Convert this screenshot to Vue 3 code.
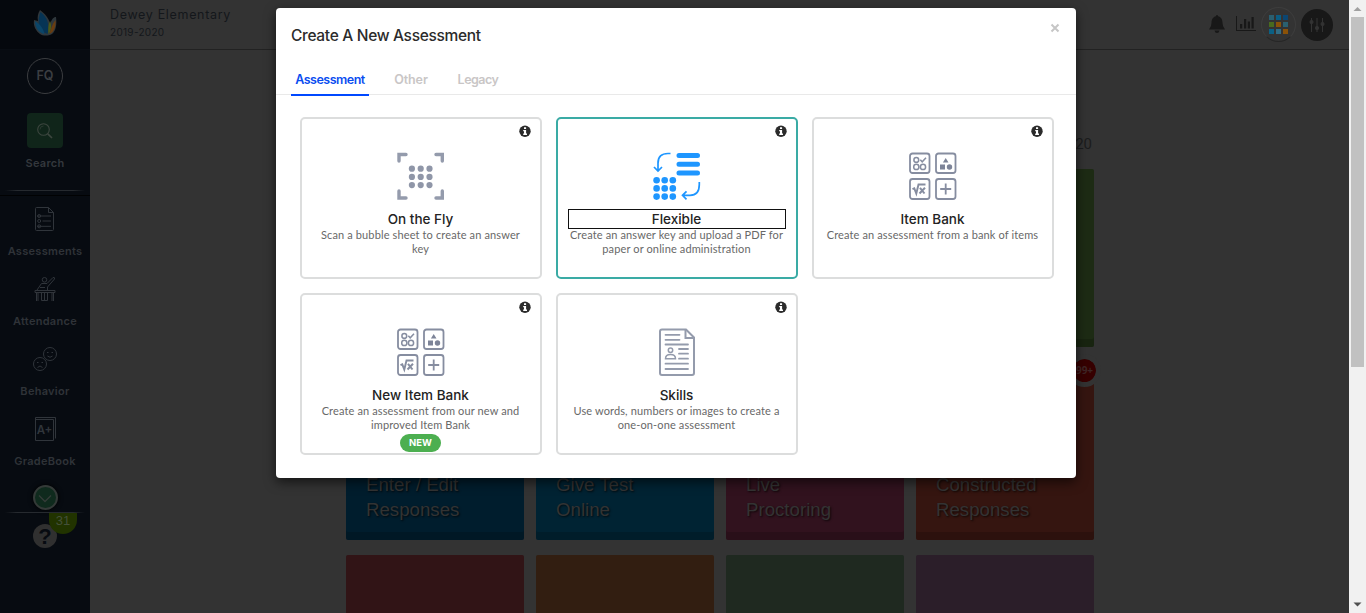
<script setup>
const menu = [
  { label: 'Assessments', icon: 'list', cls: 'm-ass' },
  { label: 'Attendance', icon: 'desk', cls: 'm-att' },
  { label: 'Behavior', icon: 'faces', cls: 'm-beh' },
  { label: 'GradeBook', icon: 'grade', cls: 'm-gra' },
]
const tabs = [
  { label: 'Assessment', cls: 't-ass active' },
  { label: 'Other', cls: 't-oth' },
  { label: 'Legacy', cls: 't-leg' },
]
const cards = [
  { title: 'On the Fly', icon: 'scan', lines: ['Scan a bubble sheet to create an answer', 'key'], cls: 'c-fly' },
  { title: 'Flexible', icon: 'flex', lines: ['Create an answer key and upload a PDF for', 'paper or online administration'], cls: 'c-flex selected' },
  { title: 'Item Bank', icon: 'bank', lines: ['Create an assessment from a bank of items'], cls: 'c-bank' },
  { title: 'New Item Bank', icon: 'bank', lines: ['Create an assessment from our new and', 'improved Item Bank'], cls: 'c-new', badge: 'NEW' },
  { title: 'Skills', icon: 'skills', lines: ['Use words, numbers or images to create a', 'one-on-one assessment'], cls: 'c-skills' },
]
const tiles = [
  { cls: 'plain' }, { cls: 'plain' }, { cls: 'plain' }, { cls: 'green' },
  { cls: 'navy', lines: ['Enter / Edit', 'Responses'] },
  { cls: 'teal', lines: ['Give Test', 'Online'] },
  { cls: 'plum', lines: ['Live', 'Proctoring'] },
  { cls: 'rust', lines: ['Constructed', 'Responses'], count: '99+' },
  { cls: 'maroon' }, { cls: 'brown' }, { cls: 'moss' }, { cls: 'violet' },
]
const gridDots = ['#2a5f70', '#0b5c82', '#0b4672', '#496a1e', '#8a5208', '#2a6070', '#0b6084', '#316c84', '#8a5208']
</script>

<template>
  <div class="app">
    <aside class="side">
      <div class="logo">
        <svg width="26" height="28" viewBox="0 0 26 28">
          <path d="M7 1C12 5 16 9 17 15C19 9 21 8 23 8C24 15 23 22 19 25C15 27 10 27 7 25C3 22 0 17 1 11L5 12C4 8 5 4 7 1Z" fill="#2f373c" />
          <path d="M7.500 3C14 8 17 15 14.500 25C5 22 4 12 7.500 3Z" fill="#063455" />
          <path d="M2 12C7 15 10 19 11.500 25C6 24 2 19 2 12Z" fill="#0b4568" />
          <path d="M17 12C19 17 18 22 15.500 25C15 20 15 16 17 12Z" fill="#4c5a18" />
          <path d="M22.500 11C23 18 21 23 16.500 25C18 20 19 15 22.500 11Z" fill="#6b3d10" />
        </svg>
      </div>
      <div class="avatar">FQ</div>
      <div class="search-btn">
        <svg width="18" height="18" viewBox="0 0 18 18" fill="none" stroke="#3c463f">
          <circle cx="7.500" cy="7.500" r="5.800" stroke-width="1.100" />
          <path d="M11.800 11.800L16 16" stroke-width="1.700" />
          <path d="M4 7.500A3.500 3.500 0 0 1 7.500 4" stroke-width=".6" />
        </svg>
      </div>
      <div class="side-label search-label"><span>Search</span></div>
      <div class="rule"></div>
      <nav class="menu">
        <div v-for="m in menu" :key="m.label" class="menu-item" :class="m.cls">
          <svg width="26" height="26" viewBox="0 0 26 26" fill="none" stroke="#30353b" stroke-width="1">
            <g v-if="m.icon === 'list'">
              <path d="M4.500 1.500H16.500L21.500 6.500V23.500Q21.500 24.500 20.500 24.500H4.500Q3.500 24.500 3.500 23.500V2.500Q3.500 1.500 4.500 1.500ZM16.500 1.500V6.500H21.500" />
              <circle cx="7.200" cy="10" r="1.500" /><circle cx="7.200" cy="15" r="1.500" /><circle cx="7.200" cy="20.300" r="1.500" />
              <path d="M5 10H19M10.500 15H19M5 20.300H19" />
            </g>
            <g v-else-if="m.icon === 'desk'">
              <circle cx="12.500" cy="3.800" r="2.300" />
              <path d="M5 14L9.500 7.500H15L21 1.500Q23 1 22.500 3L15.500 11V14M8 11.500H13M3 14.500H23V16.500H3ZM4.500 16.500V25M6 16.500V25M20 16.500V25M21.500 16.500V25M9.500 17V24.500H15.500V17M12.500 17V24" />
            </g>
            <g v-else-if="m.icon === 'faces'">
              <circle cx="18" cy="8" r="6.500" /><circle cx="8" cy="18" r="6.500" />
              <path d="M15.500 10Q18 12.500 20.500 10M5.500 21.500Q8 18.500 10.500 21.500M15 6.500H16.500M19.500 6.500H21M5 16.500H6.500M9.500 16.500H11" />
            </g>
            <g v-else>
              <path d="M3.500 24.500V1.500H23.500V22.500M3.500 3.500H21.500V24.500H3.500" />
              <text x="12.500" y="18.200" text-anchor="middle" class="grade-txt">A+</text>
            </g>
          </svg>
          <div class="side-label"><span>{{ m.label }}</span></div>
        </div>
      </nav>
      <div class="toggle">
        <svg width="16" height="10" viewBox="0 0 16 10" fill="none" stroke="#343c38" stroke-width="1.400"><path d="M2 1.500L8 7.500L14 1.500" /></svg>
      </div>
      <div class="rule low"></div>
      <div class="help">?<div class="help-badge">31</div></div>
    </aside>

    <main class="main">
      <header class="top">
        <div class="school">
          <div class="school-name">Dewey Elementary</div>
          <div class="school-year">2019-2020</div>
        </div>
        <div class="tools">
          <svg class="bell" width="18" height="20" viewBox="0 0 18 20" fill="#181818">
            <path d="M9 1Q10 1 10 2.300C13.500 3 14.500 6 14.500 9Q14.500 12.500 17 15.500H1Q3.500 12.500 3.500 9C3.500 6 4.500 3 8 2.300Q8 1 9 1ZM6.500 16.500H11.500Q11 19 9 19T6.500 16.500Z" />
          </svg>
          <svg class="bars" width="22" height="18" viewBox="0 0 22 18" fill="#181818">
            <path d="M1 1H2V15H21V16H1ZM5 9H7.200V13.500H5ZM9 4H11.200V13.500H9ZM12.800 6.500H15V13.500H12.800ZM16.500 2H18.700V13.500H16.500Z" />
          </svg>
          <div class="grid-btn"><i v-for="(c, i) in gridDots" :key="i" :style="{ background: c }"></i></div>
          <div class="sliders">
            <svg width="18" height="18" viewBox="0 0 18 18" stroke="#333" fill="#333" stroke-width="1.100">
              <path d="M3.500 2V16M9 2V16M14.500 2V16" />
              <circle cx="3.500" cy="6" r="1.500" /><circle cx="9" cy="12" r="1.500" /><circle cx="14.500" cy="8" r="1.500" />
            </svg>
          </div>
        </div>
      </header>
      <div class="session">2019-2020</div>
      <div class="tiles">
        <div v-for="(t, i) in tiles" :key="i" class="tile" :class="t.cls">
          <div v-for="l in t.lines" :key="l">{{ l }}</div>
          <span v-if="t.count" class="count">{{ t.count }}</span>
        </div>
      </div>
    </main>

    <div class="scroll">
      <svg width="17" height="17" viewBox="0 0 17 17"><path d="M4.500 11L8.500 7L12.500 11Z" fill="#a0a0a0" /></svg>
      <div class="thumb"></div>
      <svg class="down" width="17" height="17" viewBox="0 0 17 17"><path d="M4.500 6.500L8.500 10.500L12.500 6.500Z" fill="#505050" /></svg>
    </div>

    <section class="modal">
      <div class="modal-head">
        <h1><span>Create A New Assessment</span></h1>
        <svg class="close" width="10" height="10" viewBox="0 0 10 10" stroke="#c6c6c6" stroke-width="2"><path d="M1.500 1.500L8.500 8.500M8.500 1.500L1.500 8.500" /></svg>
      </div>
      <div class="tabs">
        <div v-for="t in tabs" :key="t.label" class="tab" :class="t.cls">{{ t.label }}</div>
      </div>
      <div class="cards">
        <article v-for="c in cards" :key="c.title" class="card" :class="c.cls">
          <svg class="info" width="12" height="12" viewBox="0 0 12 12">
            <circle cx="6" cy="6.300" r="5.700" fill="#2b2b2b" />
            <path d="M5 2.200H7.100V3.900H5ZM4.200 4.900H7.100V8.600H8V9.900H4.200V8.600H5V6.200H4.200Z" fill="#fff" />
          </svg>
          <svg class="pic" width="48" height="48" viewBox="0 0 48 48">
            <g v-if="c.icon === 'scan'">
              <path d="M2 9V2.500H9M39 2.500H45.300V9M45.300 39V46H39M9 46H2V39" fill="none" stroke="#949bac" stroke-width="3.400" stroke-linecap="round" />
              <g fill="#8f96a8">
                <template v-for="y in 3" :key="y"><circle v-for="x in 3" :key="x" :cx="6.100 + x * 8.800" :cy="8.500 + y * 8.200" r="3.100" /></template>
              </g>
            </g>
            <g v-else-if="c.icon === 'flex'">
              <path d="M26 3.500H44.500M26 12.200H44.500M26 21.100H44.500" stroke="#1e96ff" stroke-width="5" stroke-linecap="round" />
              <path d="M17.500 1.500H15Q5 1.500 5 11.200V18M1 15L5 19L9 15M46.300 30V32.500Q46.300 43.300 37 43.300H30M33.500 39.300L29.500 43.300L33.500 47.300" fill="none" stroke="#1e96ff" stroke-width="1.700" />
              <g fill="#1e96ff">
                <template v-for="y in 3" :key="y"><circle v-for="x in 3" :key="x" :cx="-4.500 + x * 8.100" :cy="20 + y * 8.200" r="3.300" /></template>
              </g>
            </g>
            <g v-else-if="c.icon === 'bank'" fill="none" stroke="#868da0" stroke-width="1.800">
              <rect x="1" y="1.500" width="19.500" height="19.500" rx="2.500" /><rect x="27" y="1.500" width="19.500" height="19.500" rx="2.500" />
              <rect x="1" y="27" width="19.500" height="20" rx="2.500" /><rect x="27" y="27" width="19.500" height="20" rx="2.500" />
              <g stroke-width="1.500">
                <circle cx="7.300" cy="7.900" r="2.400" /><circle cx="7.300" cy="14.900" r="2.600" /><circle cx="14" cy="14.900" r="2.600" />
                <path d="M11.300 7.800L13.200 9.800L17 5.800" />
              </g>
              <path d="M3.500 37.200L5.300 36.300L7.300 41.500L9.500 32.500H16.500" stroke-width="1.900" />
              <path d="M11 35.800L15.500 41.500M16 35.800L10.500 41.500" stroke-width="2" />
              <path d="M36.700 31.500V42.500M31.200 37H42.200" />
              <path d="M36.700 6L39.500 10.500H33.900ZM31 12.500H36V17.500H31ZM37.800 15A2.700 2.700 0 1 0 43.200 15A2.700 2.700 0 1 0 37.800 15Z" fill="#7d8498" stroke="none" />
            </g>
            <g v-else fill="none" stroke="#949bac" stroke-width="2">
              <path d="M9 1.500H33L41 9.500V45Q41 47 39 47H9Q7 47 7 45V3.500Q7 1.500 9 1.500Z" />
              <path d="M32.500 2V10H40.500" />
              <path d="M12.500 6.800H26.500M12.500 11.800H26.500M12.500 16.500H35M26 21H35M26 25.700H35M26 30.700H35M12.500 35.700H35M12.500 41H35" stroke-linecap="round" stroke-width="1.800" />
              <circle cx="17.500" cy="22.300" r="2.200" stroke-width="1.500" />
              <path d="M12.500 30.700Q12.500 26.500 17.500 26.500T22.500 30.700Z" stroke-width="1.500" />
            </g>
          </svg>
          <h2><span>{{ c.title }}</span></h2>
          <p v-for="(l, i) in c.lines" :key="l" :class="'l' + i"><span>{{ l }}</span></p>
          <div v-if="c.badge" class="new">{{ c.badge }}</div>
        </article>
      </div>
    </section>
  </div>
</template>

<style>
body { margin: 0; overflow: hidden; }
</style>

<style scoped>
* { box-sizing: border-box; }
svg { display: block; flex: none; }
.app { position: relative; width: 1366px; height: 613px; overflow: hidden; display: flex; background: #333; font-family: Inter, sans-serif; }

.side { width: 90px; height: 613px; background: #070b11; display: flex; flex-direction: column; align-items: center; flex: none; }
.logo { width: 90px; height: 50px; background: #05080d; border-bottom: 1px solid #090d13; padding: 9px 0 0 33px; flex: none; }
.avatar { width: 36px; height: 36px; margin-top: 8px; border: 1px solid #3b3d40; border-radius: 50%; color: #3b3e42; font-size: 12.500px; font-weight: 600; line-height: 34px; text-align: center; flex: none; }
.search-btn { width: 36px; height: 35px; margin-top: 19px; border-radius: 4px; background: #10251a; display: flex; align-items: center; justify-content: center; flex: none; }
.side-label { color: #2f3338; font-size: 11px; font-weight: 600; line-height: 16px; height: 16px; white-space: nowrap; text-align: center; letter-spacing: .28px; }
.search-label { margin-top: 7px; color: #34383d; flex: none; }
.rule { width: 80px; height: 1px; margin-top: 19px; background: linear-gradient(90deg, transparent, #262a2f 15%, #262a2f 85%, transparent); flex: none; }
.menu { width: 90px; margin-top: 4px; border-top: 1px solid #010203; flex: none; }
.menu-item { height: 70px; padding-top: 10px; display: flex; flex-direction: column; align-items: center; }
.menu-item .side-label { margin-top: 11px; }
.grade-txt { font: 600 11.500px Inter, sans-serif; fill: #30353b; stroke: none; }
.toggle { width: 25px; height: 25px; margin-top: 9px; border-radius: 50%; border: 2px solid #343a38; background: #0f2a1d; box-shadow: 0 0 5px #000; display: flex; align-items: center; justify-content: center; padding-top: 3px; flex: none; }
.rule.low { margin-top: 2px; }
.help { position: relative; width: 24px; height: 24px; margin-top: 11px; border-radius: 50%; background: #303030; color: #070b11; font: bold 22px/25px "Liberation Sans", Arial, sans-serif; text-align: center; flex: none; }
.help-badge { position: absolute; left: 16px; top: -11px; width: 28px; height: 21px; border-radius: 0 0 14px 14px / 0 0 14px 14px; background: #213300; color: #44503a; font: 13px/16px "Liberation Sans", Arial, sans-serif; }

.main { width: 1259px; flex: none; }
.top { height: 50px; border-bottom: 1px solid #222; display: flex; justify-content: space-between; color: #14171b; }
.school { padding: 7px 0 0 20px; white-space: nowrap; }
.school-name { font-size: 12.500px; line-height: 16px; letter-spacing: .67px; }
.school-year { font-size: 10px; line-height: 14px; margin-top: 2px; letter-spacing: .3px; }
.tools { display: flex; align-items: flex-start; padding-right: 16px; }
.bell { margin: 14px 9px 0 0; }
.bars { margin: 15px 4px 0 0; }
.grid-btn { width: 35px; height: 35px; margin-top: 7px; border: 1px solid #3d3d3d; border-bottom-color: #262626; border-radius: 50%; display: grid; grid-template-columns: repeat(3, 5px); gap: 2px; align-content: center; justify-content: center; grid-auto-rows: 5px; }
.sliders { width: 32px; height: 32px; margin: 9px 0 0 5px; border-radius: 50%; background: #181818; display: flex; align-items: center; justify-content: center; }
.session { height: 119px; padding: 84px 257px 0 0; text-align: right; color: #1b1c1d; font: 15px/20px Roboto, sans-serif; }
.tiles { margin-left: 256px; display: grid; grid-template-columns: repeat(4, 178px); grid-auto-rows: 178px; gap: 15px 12px; }
.tile { position: relative; border-radius: 2px; padding: 110px 0 0 20px; color: #333; font: 18.660px/25px "Liberation Sans", Arial, sans-serif; text-shadow: 1px 1px 2px rgba(0, 0, 0, .7); box-shadow: inset 0 -8px 0 rgba(0, 0, 0, .16); }
.tile.plain { box-shadow: none; }
.green { background: #1d2b14; }
.navy { background: #001d2d; }
.teal { background: #002333; }
.plum { background: #31121e; }
.rust { background: #351510; }
.maroon { background: #311416; }
.brown { background: #321e11; }
.moss { background: #1f2920; }
.violet { background: #2b1e29; }
.count { position: absolute; right: -7px; top: -8px; width: 33px; height: 33px; border: 5px solid #333; border-radius: 50%; background: #360000; background-clip: padding-box; color: #3f2626; font: bold 10px/22px "Open Sans", sans-serif; text-align: center; text-shadow: none; }

.scroll { width: 17px; height: 613px; background: #f1f1f1; flex: none; display: flex; flex-direction: column; align-items: center; }
.thumb { width: 13px; height: 350px; background: #c1c1c1; }
.down { margin-top: auto; }

.modal { position: absolute; left: 276px; top: 8px; width: 800px; height: 470px; background: #fff; border-radius: 4px; box-shadow: 0 4px 12px rgba(0, 0, 0, .6); }
.modal-head { height: 56px; padding: 15px 16px 0 15px; display: flex; justify-content: space-between; }
h1 { margin: 0; font-size: 15.500px; font-weight: 500; line-height: 25px; letter-spacing: -.32px; color: #2b2b2b; white-space: nowrap; }
.tabs { height: 31px; padding-left: 15px; border-bottom: 1px solid #e9e9e9; display: flex; }
.tab { height: 32px; font-size: 12.500px; font-weight: 600; line-height: 32px; letter-spacing: -.5px; color: #c9c6c6; text-align: center; white-space: nowrap; }
.tab.active { width: 78px; color: #0a4df0; border-bottom: 2px solid #0048ff; }
.t-oth { width: 36px; margin-left: 24px; letter-spacing: -.1px; }
.t-leg { width: 42px; margin-left: 28px; }
.cards { padding: 22px 22px 0 24px; display: grid; grid-template-columns: repeat(3, 242px); grid-auto-rows: 162px; gap: 14px; }
.card { position: relative; border: 2px solid #dcdddd; border-radius: 5px; padding: 33px 10px 0; display: flex; flex-direction: column; align-items: center; }
.card.selected { border-color: #3aaba5; }
.pic { margin-right: 1px; }
.info { position: absolute; right: 9px; top: 6px; }
h2 { width: 218px; height: 20px; margin: 9px 0 0; padding-right: 1px; font-size: 13.500px; font-weight: 500; line-height: 20px; text-align: center; color: #232323; white-space: nowrap; }
.selected h2 { outline: 1px solid #111; outline-offset: -1px; }
p { margin: 0; height: 14px; padding-right: 1px; line-height: 12.500px; font-family: Lato, sans-serif; font-size: 11px; letter-spacing: .13px; color: #686868; white-space: nowrap; }
.new { width: 41px; height: 18px; margin: 1px 1px 0 0; border-radius: 9px; background: #4caf50; color: #fff; font: 700 9.500px/18px Inter, sans-serif; text-align: center; flex: none; }
</style>
